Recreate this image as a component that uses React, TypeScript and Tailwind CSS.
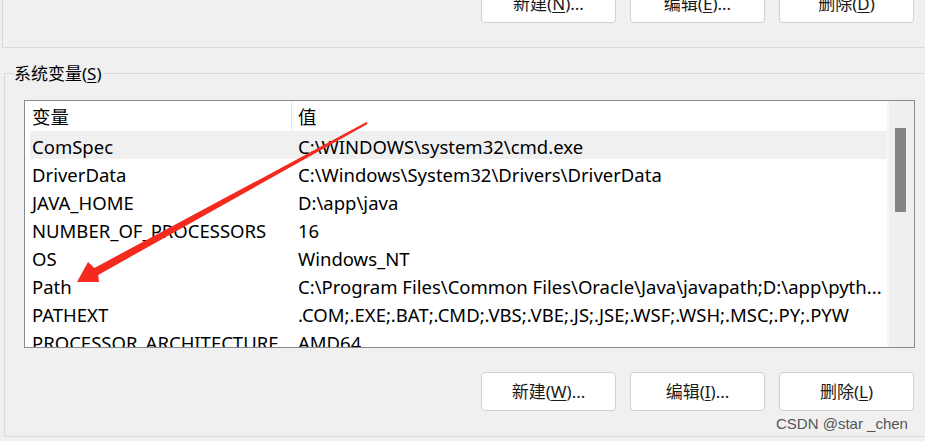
import React from "react";

const rows: [string, string][] = [
  ["ComSpec", "C:\\WINDOWS\\system32\\cmd.exe"],
  ["DriverData", "C:\\Windows\\System32\\Drivers\\DriverData"],
  ["JAVA_HOME", "D:\\app\\java"],
  ["NUMBER_OF_PROCESSORS", "16"],
  ["OS", "Windows_NT"],
  ["Path", "C:\\Program Files\\Common Files\\Oracle\\Java\\javapath;D:\\app\\pyth..."],
  ["PATHEXT", ".COM;.EXE;.BAT;.CMD;.VBS;.VBE;.JS;.JSE;.WSF;.WSH;.MSC;.PY;.PYW"],
  ["PROCESSOR_ARCHITECTURE", "AMD64"],
];

function Btn({ label, mnemonic, dots }: { label: string; mnemonic: string; dots?: boolean }) {
  return (
    <button className="w-[135px] h-[39px] rounded-[4px] border border-[#d0d0d0] bg-white text-[17px] text-[#1a1a1a] flex items-center justify-center">
      {label}(<span className="underline underline-offset-2">{mnemonic}</span>){dots ? "..." : ""}
    </button>
  );
}

export default function App() {
  return (
    <div
      className="relative w-[925px] h-[441px] overflow-hidden bg-[#f0f0f0] text-black flex flex-col"
      style={{ fontFamily: '"Noto Sans", "Noto Sans CJK SC", sans-serif' }}
    >
      {/* user variables group (bottom edge only visible) */}
      <div className="ml-[2px] h-[48px] shrink-0 border-l border-b border-[#d9d9d9] flex flex-col">
        <div className="-mt-[16px] flex justify-end gap-[14px] pr-[11px]">
          <Btn label="新建" mnemonic="N" dots />
          <Btn label="编辑" mnemonic="E" dots />
          <Btn label="删除" mnemonic="D" />
        </div>
      </div>

      {/* system variables group */}
      <div className="mt-[25px] ml-[4px] h-[364px] shrink-0 border-l border-t border-b border-[#d9d9d9] flex flex-col">
        <div className="-mt-[10px] ml-[8px] w-fit bg-[#f0f0f0] px-[1px] text-[17px] leading-[20px]">
          系统变量(<span className="underline underline-offset-2">S</span>)
        </div>

        <div className="mt-[16px] ml-[19px] w-[891px] h-[248px] shrink-0 border border-[#858a91] bg-white flex overflow-hidden">
          <div className="w-[862px] text-[18.5px]">
            <div className="h-[30px] flex items-center">
              <div className="w-[267px] h-full pl-[7px] pt-[1px] flex items-center border-r border-[#e5e5e5]">变量</div>
              <div className="pl-[6px] pt-[1px]">值</div>
            </div>
            {rows.map(([k, v], i) => (
              <div
                key={k}
                className={
                  "ml-[5px] h-[28px] pt-[3px] flex items-center whitespace-nowrap " +
                  (i === 0 ? "bg-[#f0f0f0]" : "")
                }
              >
                <div className="w-[262px] pl-[2px] shrink-0">{k}</div>
                <div className="pl-[6px] overflow-hidden text-ellipsis">{v}</div>
              </div>
            ))}
          </div>
          <div className="flex-1 bg-[#efefef] border-l-2 border-[#f7f7f7]">
            <div className="ml-[6px] mt-[27px] w-[11px] h-[84px] bg-[#858585]" />
          </div>
        </div>

        <div className="mt-[24px] flex justify-end gap-[14px] pr-[11px]">
          <Btn label="新建" mnemonic="W" dots />
          <Btn label="编辑" mnemonic="I" dots />
          <Btn label="删除" mnemonic="L" />
        </div>
      </div>

      {/* red annotation arrow */}
      <svg className="absolute inset-0 pointer-events-none" width="925" height="441" viewBox="0 0 925 441">
        <polygon
          points="77,282 88,262 94.4,267.9 366.5,122.1 367.5,123.9 98.2,274.9 99,282"
          fill="#f52a1e"
        />
      </svg>

      {/* watermark */}
      <div
        className="absolute left-[776px] top-[415px] text-[15px] leading-[18px] text-[#555]"
        style={{ fontFamily: '"Liberation Sans", Arial, sans-serif' }}
      >
        CSDN @star _chen
      </div>
    </div>
  );
}
